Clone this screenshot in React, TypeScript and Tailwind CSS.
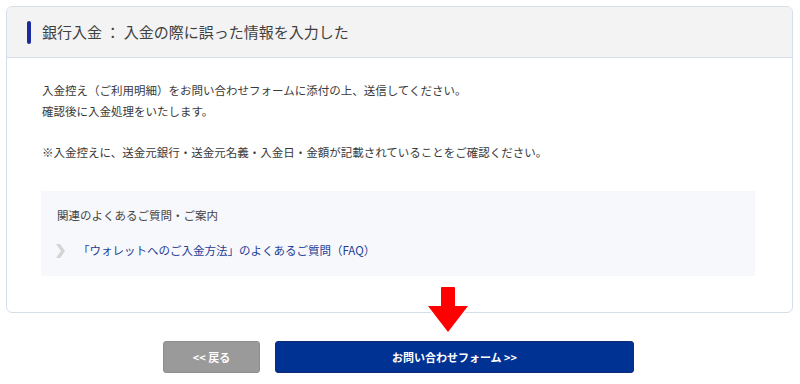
import React from "react";

export default function App() {
  const font = { fontFamily: '"Noto Sans CJK JP", "Noto Sans", sans-serif' };
  return (
    <div className="w-[800px] h-[384px] bg-white relative" style={font}>
      <div className="pt-[6px] pl-[6px] pr-[7px]">
        <div className="border border-[#d6dee9] rounded-[6px] overflow-hidden bg-white">
          <div className="h-[51px] bg-[#f3f3f3] border-b border-[#d6dee9] flex items-center pl-[20px]">
            <div className="w-[4px] h-[23px] rounded-full bg-[#1c2a9c]" />
            <div className="ml-[11px] text-[15px] text-[#3f3f3f]">
              銀行入金&nbsp;：&nbsp;入金の際に誤った情報を入力した
            </div>
          </div>
          <div className="pt-[22px] pl-[35px] pr-[37px] pb-[36px] text-[11.5px] leading-[21px] text-[#3a3a3a]">
            <p>
              入金控え（ご利用明細）をお問い合わせフォームに添付の上、送信してください。
              <br />
              確認後に入金処理をいたします。
            </p>
            <p className="mt-[20px]">
              ※入金控えに、送金元銀行・送金元名義・入金日・金額が記載されていることをご確認ください。
            </p>
            <div className="mt-[28px] -ml-[1px] bg-[#f7f8fc] pt-[14px] pb-[15px] pl-[16px]">
              <div className="text-[#444]">関連のよくあるご質問・ご案内</div>
              <div className="mt-[14px] flex items-center">
                <svg width="9" height="14" viewBox="0 0 9 14" className="ml-[-1px]">
                  <polygon points="0,0 4,0 9,7 4,14 0,14 5,7" fill="#d4d4d4" />
                </svg>
                <span className="ml-[13px] text-[#1f3d96]">
                  「ウォレットへのご入金方法」のよくあるご質問（FAQ）
                </span>
              </div>
            </div>
          </div>
        </div>
      </div>

      <div className="mt-[28px] flex justify-center gap-[15px] pr-[3px]">
        <div className="w-[97px] h-[32px] rounded-[3px] bg-[#9a9a9a] border border-[#8e8e8e] flex items-center justify-center text-white text-[11px] font-bold">
          &lt;&lt; 戻る
        </div>
        <div className="w-[359px] h-[32px] rounded-[3px] bg-[#003294] border border-[#102a78] flex items-center justify-center text-white text-[11px] font-bold">
          お問い合わせフォーム &gt;&gt;
        </div>
      </div>

      <svg
        className="absolute left-[424px] top-[283px]"
        width="48"
        height="54"
        viewBox="0 0 48 54"
      >
        <path
          d="M18 4 H30 Q31 4 31 5 V23 H44 L24 49 L4 23 H17 V5 Q17 4 18 4 Z"
          fill="#ff0000"
          stroke="#ffffff"
          strokeWidth="3"
          strokeLinejoin="round"
          paintOrder="stroke"
        />
      </svg>
    </div>
  );
}
